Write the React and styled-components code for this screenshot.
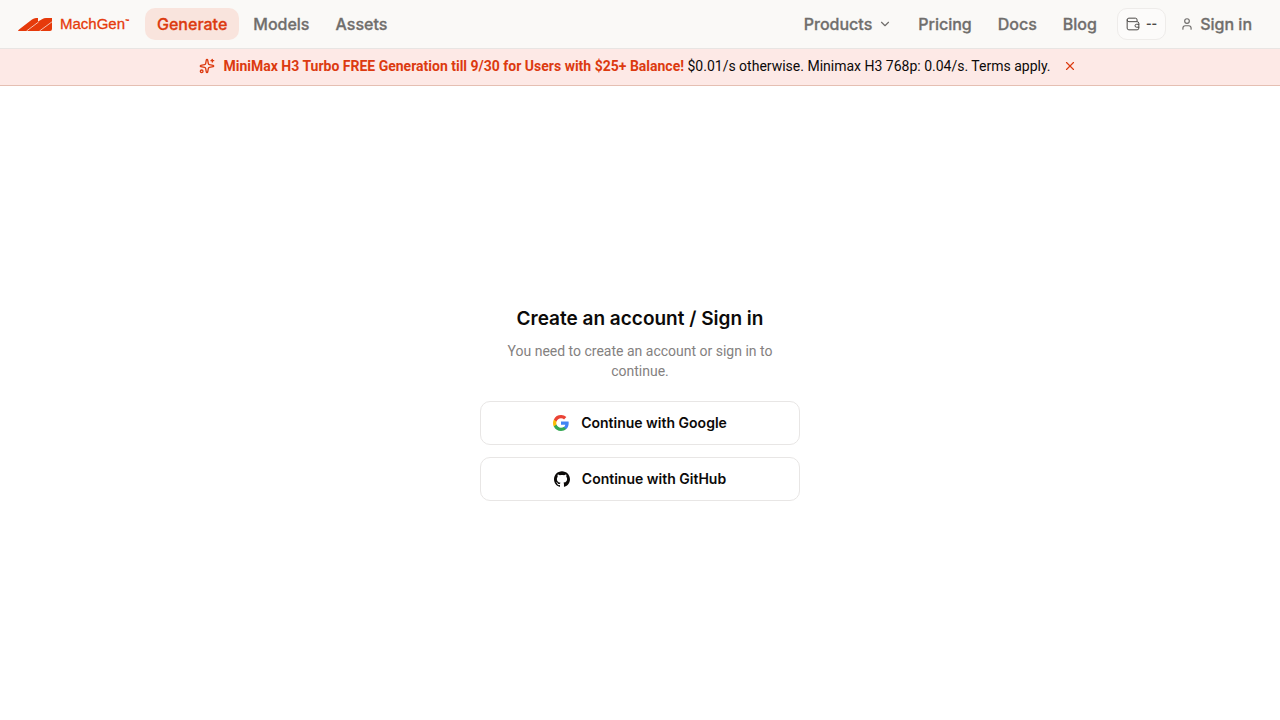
import React, { useState } from 'react';
import styled, { createGlobalStyle } from 'styled-components';
import { ChevronDown, Sparkles, User, X } from 'lucide-react';

const GlobalStyle = createGlobalStyle`
  * {
    box-sizing: border-box;
  }

  body {
    margin: 0;
    background: #ffffff;
    color: #0c0a09;
    font-family: Inter, "Liberation Sans", sans-serif;
  }

  button {
    font-family: inherit;
    cursor: pointer;
  }

  svg {
    flex-shrink: 0;
  }
`;

const Page = styled.div`
  display: flex;
  flex-direction: column;
  min-height: 100vh;
`;

const Header = styled.header`
  display: flex;
  align-items: center;
  justify-content: space-between;
  padding: 8px 16px;
  background: #faf9f7;
  border-bottom: 1px solid #e8e5e3;
`;

const Group = styled.div`
  display: flex;
  align-items: center;
`;

const Logo = styled.a`
  display: flex;
  align-items: center;
  gap: 8px;
  width: 113px;
  margin-right: 16px;
  padding-left: 2px;
  color: #e63a0b;
  font-family: "Liberation Sans", Arial, sans-serif;
  font-size: 15px;
  line-height: 20px;
  text-decoration: none;
`;

const LogoText = styled.span`
  display: flex;
  -webkit-text-stroke: 0.3px currentColor;
`;

const TradeMark = styled.span`
  font-size: 4px;
  line-height: 14px;
`;

const Nav = styled.nav`
  display: flex;
  align-items: center;
  gap: 2px;
`;

const navItem = `
  display: flex;
  align-items: center;
  height: 32px;
  padding: 0 12px;
  border: 0;
  border-radius: 10px;
  font-size: 16px;
  font-weight: 500;
  line-height: 24px;
  text-decoration: none;
  white-space: nowrap;
  -webkit-text-stroke: 0.3px currentColor;
`;

const NavLink = styled.a`
  ${navItem}
  background: ${({ $active }) => ($active ? '#f9e4dd' : 'transparent')};
  color: ${({ $active }) => ($active ? '#dc3a10' : '#706e6c')};
`;

const NavButton = styled.button`
  ${navItem}
  gap: 6px;
  background: transparent;
  color: #706e6c;
`;

const Balance = styled.button`
  display: flex;
  align-items: center;
  gap: 6px;
  height: 32px;
  margin: 0 2px 0 8px;
  padding: 0 8px;
  border: 1px solid #eeecea;
  border-radius: 10px;
  background: #fcfbfa;
  color: #4a4846;
  font-size: 12px;
  font-weight: 700;
  line-height: 20px;
`;

const Banner = styled.div`
  display: flex;
  align-items: center;
  justify-content: center;
  gap: 8px;
  padding: 6px 16px 8px;
  background: #fde9e6;
  border-bottom: 1px solid #e5bfb2;
  color: #dc3a10;
`;

const BannerText = styled.p`
  margin: 0;
  color: #0c0a09;
  font-family: Roboto, sans-serif;
  font-size: 14px;
  line-height: 20px;

  strong {
    color: #dc3a10;
    font-weight: 700;
  }
`;

const CloseButton = styled.button`
  display: flex;
  padding: 4px;
  border: 0;
  background: transparent;
  color: #dc3a10;
`;

const Main = styled.main`
  display: flex;
  flex: 1;
  align-items: center;
  justify-content: center;
  padding: 16px;
`;

const SignInPanel = styled.section`
  display: flex;
  flex-direction: column;
  gap: 12px;
  width: 100%;
  max-width: 320px;
  text-align: center;
`;

const Title = styled.h1`
  margin: 0;
  font-size: 19px;
  font-weight: 600;
  line-height: 28px;
`;

const Description = styled.p`
  margin: -4px 16px 8px;
  color: #84817f;
  font-family: Roboto, sans-serif;
  font-size: 14px;
  line-height: 20px;
`;

const ProviderButton = styled.button`
  display: flex;
  align-items: center;
  justify-content: center;
  gap: 12px;
  height: 44px;
  border: 1px solid #e8e6e5;
  border-radius: 10px;
  background: #ffffff;
  color: #0c0a09;
  font-size: 14px;
  font-weight: 600;
  line-height: 20px;
`;

const LogoMark = () => (
  <svg width="34" height="13" viewBox="0 0 34 13" fill="currentColor" aria-hidden="true">
    <path d="M0 13 Q0 12 2 10.7 L14 1.5 Q16 0 18 0 H20 V3.5 L24 1.2 Q26 0 28 0 H34 V11 Q34 13 32 13Z" />
    <path d="M20.5 4 L8.5 13 M34 3.8 L21.5 13" fill="none" stroke="#faf9f7" strokeWidth="0.7" />
  </svg>
);

const WalletIcon = () => (
  <svg
    width="14"
    height="14"
    viewBox="0 0 24 24"
    fill="none"
    stroke="currentColor"
    strokeWidth="1.7"
    strokeLinecap="round"
    strokeLinejoin="round"
    aria-hidden="true"
  >
    <path d="M19 7V5q0-3-3-3H5a3 3 0 0 0 0 6h14q3 0 3 3v8q0 3-3 3H5q-3 0-3-3V5" />
    <path d="M22 12.5h-4a2.5 2.5 0 0 0 0 5h4" />
  </svg>
);

const GoogleIcon = () => (
  <svg width="16" height="16" viewBox="0 0 24 24" aria-hidden="true">
    <path fill="#4285F4" d="M23.52 12.27c0-.85-.08-1.67-.22-2.45H12v4.64h6.46a5.52 5.52 0 0 1-2.4 3.62v3h3.88c2.27-2.09 3.58-5.17 3.58-8.81z" />
    <path fill="#34A853" d="M12 24c3.24 0 5.96-1.07 7.94-2.91l-3.88-3.01c-1.07.72-2.45 1.15-4.06 1.15-3.13 0-5.78-2.11-6.73-4.96H1.27v3.11A12 12 0 0 0 12 24z" />
    <path fill="#FBBC05" d="M5.27 14.27A7.2 7.2 0 0 1 4.89 12c0-.79.14-1.55.38-2.27V6.62h-4A12 12 0 0 0 0 12c0 1.94.46 3.77 1.27 5.38z" />
    <path fill="#EA4335" d="M12 4.77c1.76 0 3.35.61 4.6 1.8l3.44-3.44A11.5 11.5 0 0 0 12 0 12 12 0 0 0 1.27 6.62l4 3.11C6.22 6.88 8.87 4.77 12 4.77z" />
  </svg>
);

const GitHubIcon = () => (
  <svg width="16" height="16" viewBox="0 0 24 24" fill="currentColor" aria-hidden="true">
    <path d="M12 .297c-6.63 0-12 5.373-12 12 0 5.303 3.438 9.8 8.205 11.385.6.113.82-.258.82-.577 0-.285-.01-1.04-.015-2.04-3.338.724-4.042-1.61-4.042-1.61C4.422 18.07 3.633 17.7 3.633 17.7c-1.087-.744.084-.729.084-.729 1.205.084 1.838 1.236 1.838 1.236 1.07 1.835 2.809 1.305 3.495.998.108-.776.417-1.305.76-1.605-2.665-.3-5.466-1.332-5.466-5.93 0-1.31.465-2.38 1.235-3.22-.135-.303-.54-1.523.105-3.176 0 0 1.005-.322 3.3 1.23.96-.267 1.98-.399 3-.405 1.02.006 2.04.138 3 .405 2.28-1.552 3.285-1.23 3.285-1.23.645 1.653.24 2.873.12 3.176.765.84 1.23 1.91 1.23 3.22 0 4.61-2.805 5.625-5.475 5.92.42.36.81 1.096.81 2.22 0 1.606-.015 2.896-.015 3.286 0 .315.21.69.825.57C20.565 22.092 24 17.592 24 12.297c0-6.627-5.373-12-12-12" />
  </svg>
);

const App = () => {
  const [showBanner, setShowBanner] = useState(true);

  return (
    <Page>
      <GlobalStyle />
      <Header>
        <Group>
          <Logo href="#">
            <LogoMark />
            <LogoText>
              MachGen<TradeMark>™</TradeMark>
            </LogoText>
          </Logo>
          <Nav>
            <NavLink href="#generate" $active>Generate</NavLink>
            <NavLink href="#models">Models</NavLink>
            <NavLink href="#assets">Assets</NavLink>
          </Nav>
        </Group>
        <Group>
          <Nav>
            <NavButton type="button">
              Products
              <ChevronDown size={14} />
            </NavButton>
            <NavLink href="#pricing">Pricing</NavLink>
            <NavLink href="#docs">Docs</NavLink>
            <NavLink href="#blog">Blog</NavLink>
          </Nav>
          <Balance type="button" aria-label="Balance">
            <WalletIcon />
            --
          </Balance>
          <NavButton type="button">
            <User size={14} />
            Sign in
          </NavButton>
        </Group>
      </Header>

      {showBanner && (
        <Banner>
          <Sparkles size={16} />
          <BannerText>
            <strong>MiniMax H3 Turbo FREE Generation till 9/30 for Users with $25+ Balance!</strong>
            {' '}$0.01/s otherwise. Minimax H3 768p: 0.04/s. Terms apply.
          </BannerText>
          <CloseButton type="button" aria-label="Close" onClick={() => setShowBanner(false)}>
            <X size={14} />
          </CloseButton>
        </Banner>
      )}

      <Main>
        <SignInPanel>
          <Title>Create an account / Sign in</Title>
          <Description>You need to create an account or sign in to continue.</Description>
          <ProviderButton type="button">
            <GoogleIcon />
            Continue with Google
          </ProviderButton>
          <ProviderButton type="button">
            <GitHubIcon />
            Continue with GitHub
          </ProviderButton>
        </SignInPanel>
      </Main>
    </Page>
  );
};

export default App;
